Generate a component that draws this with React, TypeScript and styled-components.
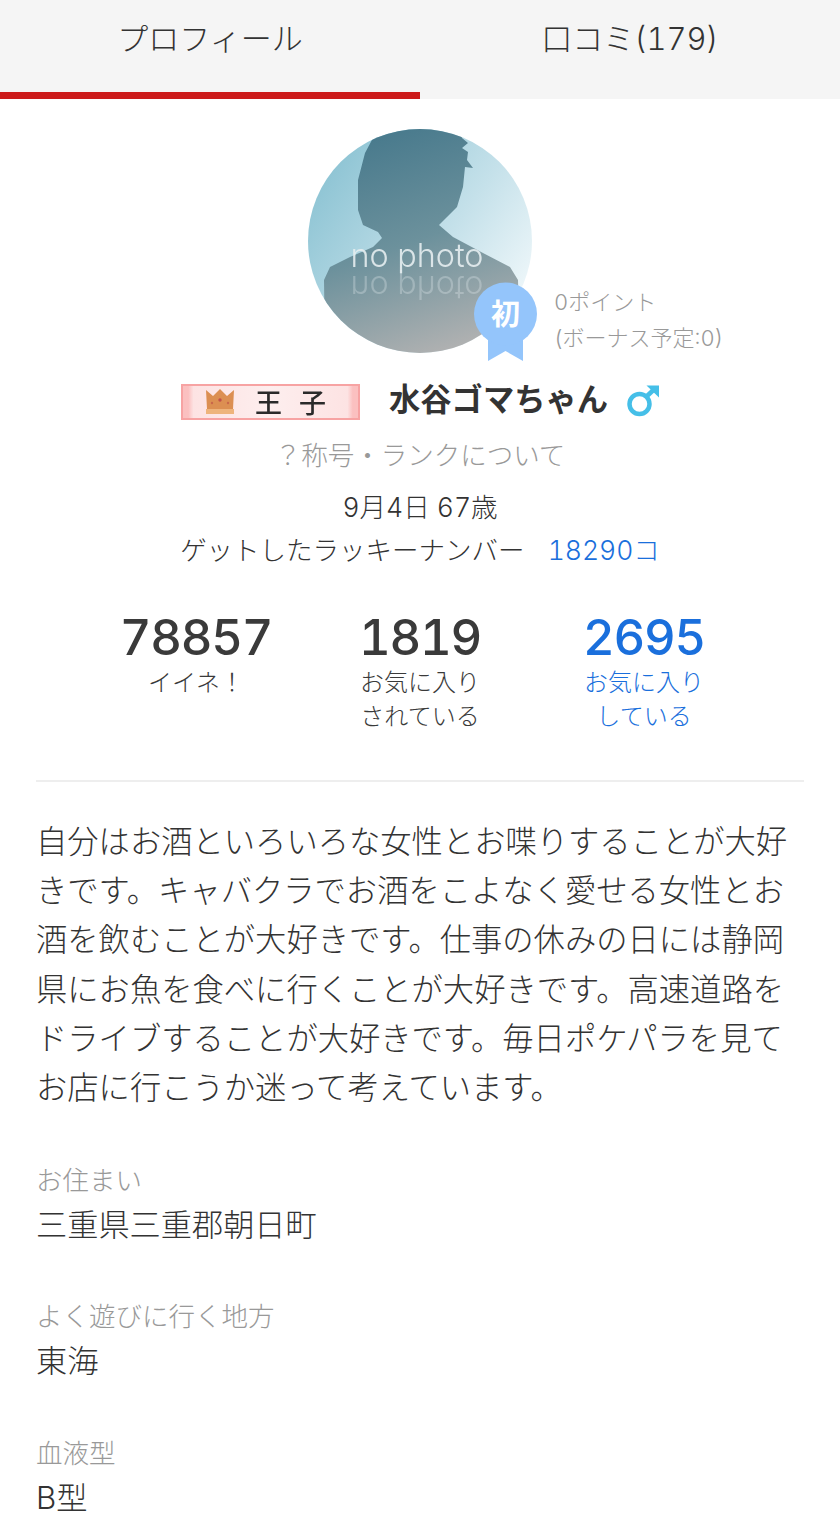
import React from 'react'
import styled, { createGlobalStyle } from 'styled-components'

const GlobalStyle = createGlobalStyle`
  html, body {
    margin: 0;
    padding: 0;
    background: #fff;
  }
  body {
    font-family: "Inter", "Noto Sans CJK JP", sans-serif;
    font-variant-numeric: tabular-nums;
    color: #333;
  }
`

const Page = styled.div`
  width: 840px;
  height: 1528px;
  overflow: hidden;
  background: #fff;
`

const Tabs = styled.div`
  display: flex;
  height: 99px;
  background: #f5f5f5;
`

const Tab = styled.div<{ $active?: boolean }>`
  width: 420px;
  box-sizing: border-box;
  height: 99px;
  padding-top: 15px;
  text-align: center;
  font-size: 31px;
  line-height: 48px;
  font-weight: 300;
  color: #333;
  border-bottom: 7px solid ${p => (p.$active ? '#cc1a1a' : 'transparent')};
`

const AvatarRow = styled.div`
  display: flex;
  justify-content: center;
  padding-top: 30px;
  height: 271px;
  box-sizing: border-box;
`

const AvatarWrap = styled.div`
  position: relative;
  width: 224px;
  height: 224px;
`

const PointNote = styled.div`
  position: absolute;
  left: 246px;
  top: 155px;
  width: 220px;
  font-size: 22px;
  line-height: 36px;
  font-weight: 300;
  color: #999;
  white-space: nowrap;
`

const Badge = styled.svg`
  position: absolute;
  left: 165px;
  top: 153px;
`

const NameRow = styled.div`
  display: flex;
  align-items: center;
  height: 60px;
  padding-left: 181px;
`

const RankPlate = styled.div`
  box-sizing: border-box;
  width: 179px;
  height: 36px;
  margin-top: 3px;
  display: flex;
  align-items: center;
  gap: 20px;
  padding-left: 22px;
  border: 2px solid #f7a3a3;
  background: linear-gradient(90deg, #fbc0c0 0, #fbc0c0 3%, #fde3e3 6%, #fdeeee 50%, #fde3e3 94%, #fbc0c0 97%, #fbc0c0 100%);
`

const RankText = styled.span`
  font-family: "Noto Sans CJK JP", sans-serif;
  font-size: 27px;
  font-weight: 500;
  line-height: 1;
  letter-spacing: 17px;
  color: #2a2a2a;
  filter: blur(0.5px);
`

const Crown = styled.svg`
  filter: blur(0.5px);
`

const Name = styled.div`
  margin-left: 29px;
  font-size: 31.3px;
  line-height: 40px;
  font-weight: 700;
  color: #333;
  white-space: nowrap;
`

const MaleIcon = styled.svg`
  margin-left: 19px;
  margin-top: 2px;
`

const RankLink = styled.div`
  margin-top: 5px;
  text-align: center;
  font-size: 26.5px;
  line-height: 40px;
  font-weight: 300;
  color: #999;
`

const Birth = styled.div`
  margin-top: 11px;
  text-align: center;
  font-size: 26.5px;
  line-height: 42px;
  font-weight: 300;
  color: #333;
`

const LuckyRow = styled.div`
  display: flex;
  justify-content: center;
  align-items: baseline;
  gap: 23px;
  font-size: 26.5px;
  line-height: 44px;
  font-weight: 300;
  color: #333;
`

const LuckyCount = styled.span`
  color: #1a6fdc;
`

const Stats = styled.div`
  display: grid;
  grid-template-columns: 224px 224px 224px;
  justify-content: center;
  margin: 38px 36px 0;
  height: 170px;
  border-bottom: 2px solid #eee;
`

const Stat = styled.div<{ $blue?: boolean }>`
  text-align: center;
  color: ${p => (p.$blue ? '#1a6fdc' : '#3a3a3a')};
`

const StatNumber = styled.div`
  font-size: 49px;
  line-height: 56px;
  font-weight: 500;
  letter-spacing: -1.2px;
`

const StatLabel = styled.div`
  font-size: 24px;
  line-height: 34px;
  font-weight: 300;
`

const Intro = styled.p`
  margin: 36px 34px 0 36px;
  font-size: 31.3px;
  line-height: 49.2px;
  font-weight: 300;
  color: #333;
`

const Field = styled.div`
  margin: 0 36px;
  padding-top: 45.6px;
`

const FieldLabel = styled.div`
  font-size: 26.5px;
  line-height: 42px;
  font-weight: 300;
  color: #999;
`

const FieldValue = styled.div`
  font-size: 31.2px;
  line-height: 49px;
  font-weight: 300;
  color: #333;
`

const Avatar = () => (
  <svg width="224" height="224" viewBox="0 0 224 224">
    <defs>
      <linearGradient id="sky" x1="0" y1="0.1" x2="1" y2="0.8">
        <stop offset="0" stopColor="#84bfd0" />
        <stop offset="0.6" stopColor="#c5e1ea" />
        <stop offset="1" stopColor="#f4fafc" />
      </linearGradient>
      <linearGradient id="body" x1="0.35" y1="0" x2="0.65" y2="1">
        <stop offset="0" stopColor="#47798c" />
        <stop offset="0.5" stopColor="#6c919c" />
        <stop offset="1" stopColor="#b2b2b2" />
      </linearGradient>
      <clipPath id="round">
        <circle cx="112" cy="112" r="112" />
      </clipPath>
    </defs>
    <g clipPath="url(#round)">
      <rect width="224" height="224" fill="url(#sky)" />
      <path
        d="M65 9 L70 -5 L150 -5 L154 9 L160 14 L154 19 L160 23 L159 31 L165 39 L157 38 L155 58 L149 78 L139 88 L131 96 L145 108 L175 124 L202 138 L210 151 L212 224 L17 224 L16 151 L22 138 L42 128 L65 118 L74 109 L70 103 L55 96 L50 81 L50 51 L57 24 Z"
        fill="url(#body)"
      />
      <text x="109" y="138" textAnchor="middle" textLength="133" lengthAdjust="spacingAndGlyphs" fontFamily="Inter, sans-serif" fontWeight="300" fontSize="33" fill="#e6eef0" opacity="0.9">no photo</text>
      <text x="109" y="-147" transform="scale(1 -1)" textAnchor="middle" textLength="133" lengthAdjust="spacingAndGlyphs" fontFamily="Inter, sans-serif" fontWeight="300" fontSize="33" fill="#e6eef0" opacity="0.3">no photo</text>
    </g>
  </svg>
)

const App: React.FC = () => (
  <Page>
    <GlobalStyle />
    <Tabs>
      <Tab $active>プロフィール</Tab>
      <Tab>口コミ(179)</Tab>
    </Tabs>
    <AvatarRow>
      <AvatarWrap>
        <Avatar />
        <Badge width="64" height="80" viewBox="0 0 64 80">
          <path d="M15 45 L15 79 L32.5 69 L50 79 L50 45 Z" fill="#94c5fb" />
          <circle cx="32.5" cy="32" r="31.5" fill="#94c5fb" />
          <text x="32.5" y="43" textAnchor="middle" fontFamily="Noto Sans CJK JP, sans-serif" fontWeight="700" fontSize="29" fill="#fff">初</text>
        </Badge>
        <PointNote>
          0ポイント
          <br />
          (ボーナス予定:0)
        </PointNote>
      </AvatarWrap>
    </AvatarRow>
    <NameRow>
      <RankPlate>
        <Crown width="30" height="27" viewBox="0 0 30 27">
          <path d="M1 2 L8 8 L15 1 L22 8 L29 2 L28 21 L2 21 Z" fill="#dc8f52" />
          <circle cx="15" cy="12" r="1.7" fill="#c0504a" />
          <circle cx="7" cy="15" r="1.2" fill="#c8684a" />
          <circle cx="23" cy="15" r="1.2" fill="#c8684a" />
          <rect x="1" y="21" width="28" height="5" fill="#eeb47c" />
        </Crown>
        <RankText>王子</RankText>
      </RankPlate>
      <Name>水谷ゴマちゃん</Name>
      <MaleIcon width="33" height="32" viewBox="0 0 33 32">
        <circle cx="12.5" cy="19" r="10" fill="none" stroke="#45bfe8" strokeWidth="4.5" />
        <path d="M19 12 L28 3.5" fill="none" stroke="#45bfe8" strokeWidth="4.5" />
        <path d="M19.5 0.5 L32 0.5 L32 12.5 Z" fill="#45bfe8" />
      </MaleIcon>
    </NameRow>
    <RankLink>？称号・ランクについて</RankLink>
    <Birth>9月4日 67歳</Birth>
    <LuckyRow>
      <span>ゲットしたラッキーナンバー</span>
      <LuckyCount>18290コ</LuckyCount>
    </LuckyRow>
    <Stats>
      <Stat>
        <StatNumber>78857</StatNumber>
        <StatLabel>イイネ！</StatLabel>
      </Stat>
      <Stat>
        <StatNumber>1819</StatNumber>
        <StatLabel>お気に入り<br />されている</StatLabel>
      </Stat>
      <Stat $blue>
        <StatNumber>2695</StatNumber>
        <StatLabel>お気に入り<br />している</StatLabel>
      </Stat>
    </Stats>
    <Intro>
      自分はお酒といろいろな女性とお喋りすることが大好きです。キャバクラでお酒をこよなく愛せる女性とお酒を飲むことが大好きです。仕事の休みの日には静岡県にお魚を食べに行くことが大好きです。高速道路をドライブすることが大好きです。毎日ポケパラを見てお店に行こうか迷って考えています。
    </Intro>
    <Field>
      <FieldLabel>お住まい</FieldLabel>
      <FieldValue>三重県三重郡朝日町</FieldValue>
    </Field>
    <Field>
      <FieldLabel>よく遊びに行く地方</FieldLabel>
      <FieldValue>東海</FieldValue>
    </Field>
    <Field>
      <FieldLabel>血液型</FieldLabel>
      <FieldValue>B型</FieldValue>
    </Field>
  </Page>
)

export default App
